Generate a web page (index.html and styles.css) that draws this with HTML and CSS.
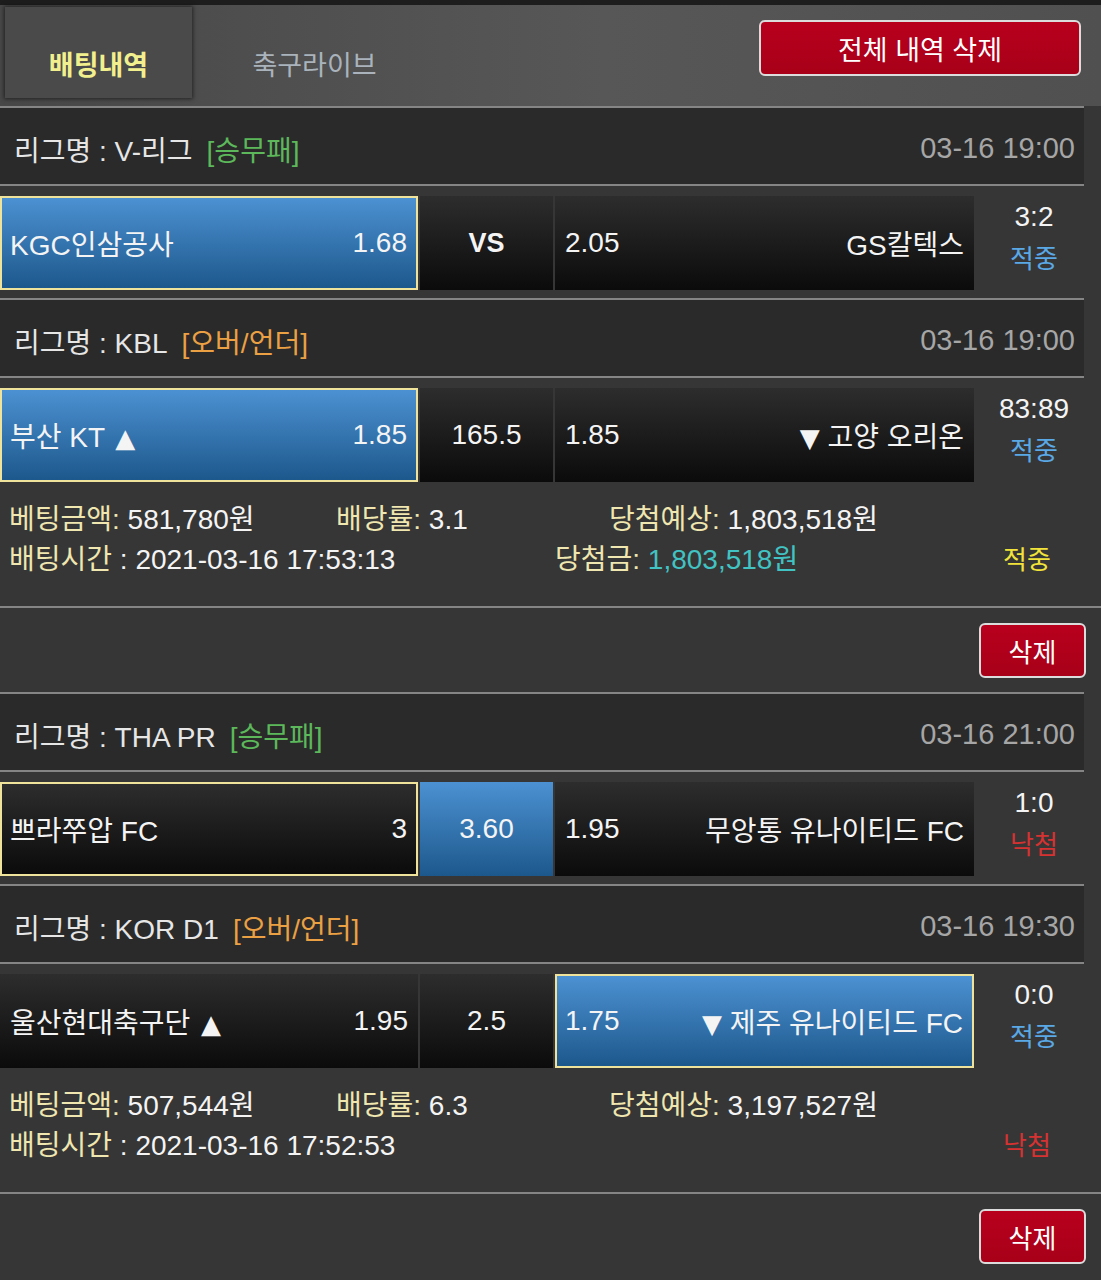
FILE: index.html
```html
<!DOCTYPE html>
<html lang="ko">

<head>
    <meta charset="UTF-8">
    <meta name="viewport" content="width=device-width, initial-scale=1.0">
    <title>배팅내역</title>
    <link rel="stylesheet" href="styles.css">
</head>

<body>
    <!-- 상단 탭 -->
    <div class="top-bar">
        <div class="tab active">배팅내역</div>
        <div class="tab">축구라이브</div>
        <button class="btn-del-all">전체 내역 삭제</button>
    </div>

    <!-- 배팅 1 -->
    <div class="game">
        <div class="league">
            <span class="league-name">리그명 : V-리그</span>
            <span class="tag green">[승무패]</span>
            <span class="date">03-16 19:00</span>
        </div>
        <div class="match">
            <div class="cell home blue picked"><span>KGC인삼공사</span><span>1.68</span></div>
            <div class="cell mid"><b class="vs">VS</b></div>
            <div class="cell away"><span>2.05</span><span>GS칼텍스</span></div>
            <div class="result"><div class="score">3:2</div><div class="state hit">적중</div></div>
        </div>
    </div>
    <div class="game">
        <div class="league">
            <span class="league-name">리그명 : KBL</span>
            <span class="tag orange">[오버/언더]</span>
            <span class="date">03-16 19:00</span>
        </div>
        <div class="match last">
            <div class="cell home blue picked"><span>부산 KT <span class="arrow">▲</span></span><span>1.85</span></div>
            <div class="cell mid">165.5</div>
            <div class="cell away"><span>1.85</span><span><span class="arrow">▼</span> 고양 오리온</span></div>
            <div class="result"><div class="score">83:89</div><div class="state hit">적중</div></div>
        </div>
    </div>
    <div class="info">
        <div class="info-row">
            <span class="c1"><span class="label">베팅금액:</span> 581,780원</span>
            <span class="c2"><span class="label">배당률:</span> 3.1</span>
            <span class="c3"><span class="label">당첨예상:</span> 1,803,518원</span>
        </div>
        <div class="info-row">
            <span class="c4"><span class="label">배팅시간</span> : 2021-03-16 17:53:13</span>
            <span class="c5"><span class="label">당첨금:</span> <span class="won">1,803,518원</span></span>
            <span class="final win">적중</span>
        </div>
    </div>
    <div class="actions"><button class="btn-del">삭제</button></div>

    <!-- 배팅 2 -->
    <div class="game">
        <div class="league">
            <span class="league-name">리그명 : THA PR</span>
            <span class="tag green">[승무패]</span>
            <span class="date">03-16 21:00</span>
        </div>
        <div class="match">
            <div class="cell home picked"><span>쁘라쭈압 FC</span><span>3</span></div>
            <div class="cell mid blue">3.60</div>
            <div class="cell away"><span>1.95</span><span>무앙통 유나이티드 FC</span></div>
            <div class="result"><div class="score">1:0</div><div class="state miss">낙첨</div></div>
        </div>
    </div>
    <div class="game">
        <div class="league">
            <span class="league-name">리그명 : KOR D1</span>
            <span class="tag orange">[오버/언더]</span>
            <span class="date">03-16 19:30</span>
        </div>
        <div class="match last">
            <div class="cell home"><span>울산현대축구단 <span class="arrow">▲</span></span><span>1.95</span></div>
            <div class="cell mid">2.5</div>
            <div class="cell away blue picked"><span>1.75</span><span><span class="arrow">▼</span> 제주 유나이티드 FC</span></div>
            <div class="result"><div class="score">0:0</div><div class="state hit">적중</div></div>
        </div>
    </div>
    <div class="info">
        <div class="info-row">
            <span class="c1"><span class="label">베팅금액:</span> 507,544원</span>
            <span class="c2"><span class="label">배당률:</span> 6.3</span>
            <span class="c3"><span class="label">당첨예상:</span> 3,197,527원</span>
        </div>
        <div class="info-row">
            <span class="c4"><span class="label">배팅시간</span> : 2021-03-16 17:52:53</span>
            <span class="c5"></span>
            <span class="final lose">낙첨</span>
        </div>
    </div>
    <div class="actions"><button class="btn-del">삭제</button></div>
</body>

</html>
```

FILE: styles.css
```css
/* 기본 */
body {
    margin: 0;
    background: #363636;
    color: #f4f4f4;
    font-family: "Liberation Sans", "Noto Sans CJK KR", sans-serif;
    font-size: 28px;
}

/* 상단 탭 영역 */
.top-bar {
    display: flex;
    height: 101px;
    border-top: 5px solid #1d1d1d;
    background: linear-gradient(90deg, #484848, #575757 55%, #505050);
}

.tab {
    box-sizing: border-box;
    width: 245px;
    height: 91px;
    margin-top: 2px;
    padding-top: 44px;
    line-height: 30px;
    text-align: center;
    font-size: 27px;
    color: #aab3bc;
}

.tab.active {
    width: 187px;
    margin-left: 5px;
    background: #4a4a4a;
    box-shadow: 0 0 4px 1px rgba(0, 0, 0, 0.55);
    color: #f2f08e;
    font-weight: bold;
}

.btn-del-all {
    margin: 15px 20px 0 auto;
    width: 322px;
    height: 56px;
    border: 2px solid #dcdcdc;
    border-radius: 6px;
    background: linear-gradient(#b8001d, #a80018);
    color: #fff;
    font-family: inherit;
    font-size: 27px;
}

/* 경기 블록 */
.game {
    width: 1084px;
    border-top: 2px solid #858585;
}

.league {
    box-sizing: border-box;
    display: flex;
    align-items: center;
    height: 78px;
    padding: 5px 9px 0 14px;
    background: #2a2a2a;
    border-bottom: 2px solid #858585;
    font-size: 28px;
    color: #e6e6e6;
    overflow: hidden;
}

.tag {
    margin-left: 14px;
}

.green { color: #5cb85a; }
.orange { color: #eba043; }

.date {
    margin-left: auto;
    color: #a6a6a6;
    font-size: 29px;
}

.match {
    display: flex;
    gap: 2px;
    height: 94px;
    padding: 10px 0 8px;
}

.match.last {
    padding-bottom: 0;
}

.cell {
    box-sizing: border-box;
    display: flex;
    align-items: center;
    justify-content: space-between;
    height: 94px;
    padding: 0 10px;
    background: linear-gradient(#2d2d2d, #0b0b0b);
    overflow: hidden;
}

.home { width: 418px; }
.away { width: 419px; }

.mid {
    width: 133px;
    justify-content: center;
}

.vs {
    font-size: 27px;
}

.arrow {
    margin-left: 3px;
    font-family: "DejaVu Sans", sans-serif;
    font-size: 26px;
}

.blue {
    background: linear-gradient(#4c91d2, #1d588c);
}

.picked {
    border: 2px solid #efe39b;
    padding: 0 9px 0 8px;
}

.result {
    box-sizing: border-box;
    flex: 1;
    display: flex;
    flex-direction: column;
    justify-content: center;
    align-items: center;
    height: 94px;
    padding: 0 0 10px 8px;
    line-height: 42px;
}

.state {
    font-size: 26px;
}

.hit { color: #5aa8e6; }
.miss { color: #d63232; }

/* 배팅 정보 */
.info {
    padding: 15px 0 29px 9px;
    border-bottom: 2px solid #858585;
}

.info-row {
    display: flex;
    align-items: center;
    height: 40px;
    overflow: hidden;
}

.label { color: #efe6b0; }
.won { color: #41c3c3; }

.c1 { width: 327px; }
.c2 { width: 273px; }
.c4 { width: 546px; }
.c5 { width: 448px; }

.final {
    font-size: 26px;
}

.final.win { color: #f2e33a; }
.final.lose { color: #d63232; }

/* 삭제 버튼 */
.actions {
    display: flex;
    justify-content: flex-end;
    height: 84px;
    padding-top: 15px;
    box-sizing: border-box;
}

.btn-del {
    margin-right: 15px;
    width: 107px;
    height: 55px;
    border: 2px solid #dcdcdc;
    border-radius: 6px;
    background: linear-gradient(#b8001d, #a80018);
    color: #fff;
    font-family: inherit;
    font-size: 26px;
}
```
